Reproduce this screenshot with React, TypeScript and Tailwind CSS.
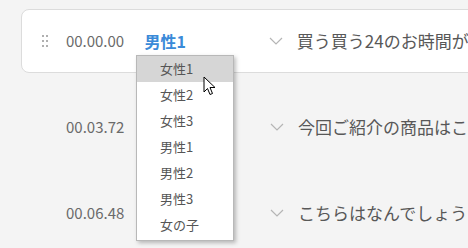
import React from 'react';

type Row = { time: string; text: string; speaker?: string };

const rows: Row[] = [
  { time: '00.00.00', speaker: '男性1', text: '買う買う24のお時間がやってまいりました' },
  { time: '00.03.72', text: '今回ご紹介の商品はこちらです' },
  { time: '00.06.48', text: 'こちらはなんでしょうか' },
];

const voices = ['女性1', '女性2', '女性3', '男性1', '男性2', '男性3', '女の子'];

const Handle: React.FC = () => (
  <div className="grid grid-cols-2 gap-x-[2px] gap-y-[3px] w-[6px]">
    {Array.from({ length: 6 }).map((_, i) => (
      <span key={i} className="block w-[2px] h-[2px] bg-[#b0b0b0]" />
    ))}
  </div>
);

const Chevron: React.FC = () => (
  <svg width="14" height="8" viewBox="0 0 14 8" fill="none">
    <polyline points="1,1 7,7 13,1" stroke="#b5b5b5" strokeWidth="1.2" />
  </svg>
);

const App: React.FC = () => {
  return (
    <div
      className="relative w-[468px] h-[248px] overflow-hidden bg-[#f4f4f4] pt-[9px] pl-[21px]"
      style={{ fontFamily: '"Noto Sans CJK JP", "Noto Sans", sans-serif' }}
    >
      <div className="flex flex-col gap-[22px]">
        {rows.map((r, i) => (
          <div
            key={i}
            className={
              i === 0
                ? 'flex items-center h-[64px] w-[600px] rounded-lg border border-[#dcdcdc] bg-white pl-[20px] shrink-0'
                : 'flex items-center h-[64px] w-[600px] rounded-lg border border-transparent pl-[20px] shrink-0'
            }
          >
            <div className="w-[24px] flex">{i === 0 && <Handle />}</div>
            <div className="w-[79px] text-[15px] text-[#6a6a6a] whitespace-nowrap">{r.time}</div>
            <div className="w-[125px] text-[16px] font-bold text-[#3a8ad8] whitespace-nowrap">{r.speaker}</div>
            <div className="w-[28px] flex items-center"><Chevron /></div>
            <div className="text-[17px] text-[#585858] whitespace-nowrap">{r.text}</div>
          </div>
        ))}
      </div>

      <div className="absolute left-[136px] top-[55px] w-[98px] bg-white border border-[#b8b8b8] shadow-[2px_2px_4px_rgba(0,0,0,0.25)]">
        {voices.map((v, i) => (
          <div
            key={v}
            className={
              i === 0
                ? 'h-[26px] flex items-center pl-[23px] text-[13px] text-[#555] bg-[#d6d6d6]'
                : 'h-[26px] flex items-center pl-[23px] text-[13px] text-[#555]'
            }
          >
            {v}
          </div>
        ))}
        <div className="h-[2px]" />
      </div>

      <svg className="absolute left-[203px] top-[76px]" width="14" height="22" viewBox="0 0 14 22">
        <path
          d="M1,1 L1,16 L4.5,12.5 L7,18.5 L9.5,17.5 L7,11.5 L12,11.5 Z"
          fill="#ffffff"
          stroke="#000000"
          strokeWidth="1"
          strokeLinejoin="round"
        />
      </svg>
    </div>
  );
};

export default App;
